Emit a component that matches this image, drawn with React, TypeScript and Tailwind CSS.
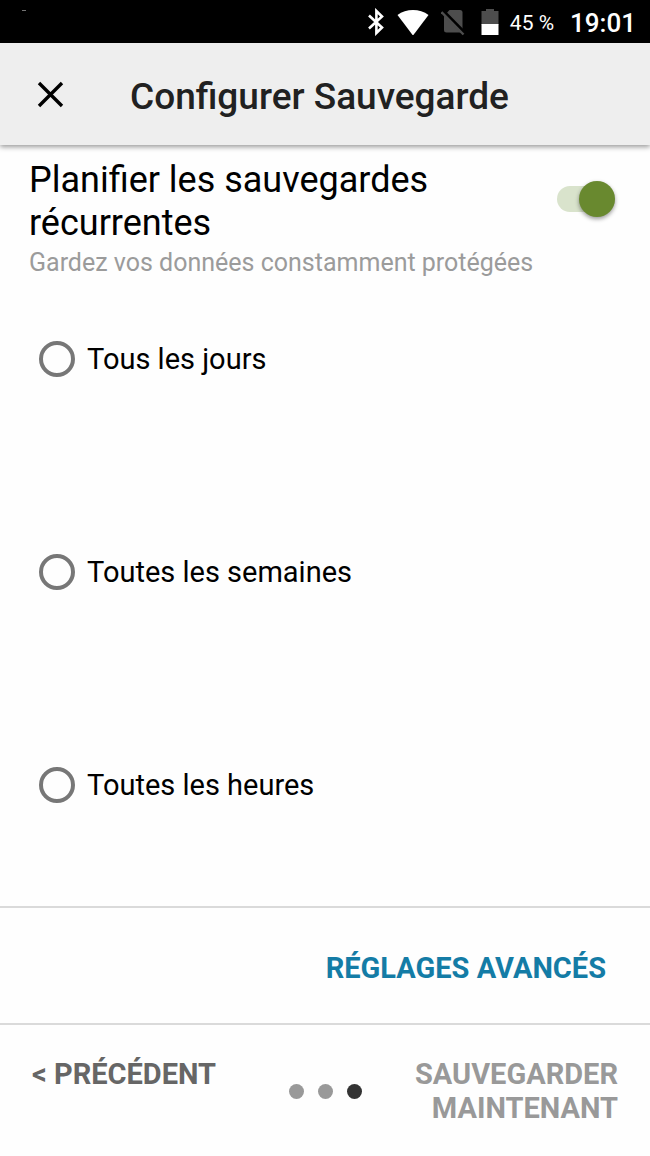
import { useState } from "react";

const frequencies = [
  { id: "daily", label: "Tous les jours" },
  { id: "weekly", label: "Toutes les semaines" },
  { id: "hourly", label: "Toutes les heures" },
];

const StatusBar = () => {
  return (
    <div className="flex h-[43px] items-center justify-between bg-black pl-[22px] pr-[14px] text-white">
      <span className="mb-[22px] h-px w-1 bg-neutral-500"></span>
      <div className="flex items-center">
        {/* Bluetooth */}
        <svg className="h-7 w-[18px]" viewBox="0 0 18 28" fill="none" stroke="currentColor" strokeWidth="2.6">
          <path d="M2 7.5 L15 19.5 L9.4 25 V3 L15 8.5 L2 20.5" />
        </svg>
        {/* Wifi */}
        <svg className="ml-3 h-7 w-8" viewBox="0 0 32 28" fill="currentColor">
          <path d="M0.5 7 C9 0.2 23 0.2 31.5 7 L16.4 27 H15.6 Z" />
        </svg>
        {/* No SIM */}
        <svg className="ml-3 h-7 w-6" viewBox="0 0 24 28">
          <path d="M8.5 2 H19 Q21.5 2 21.5 4.5 V24.5 H5.5 Q3 24.5 3 22 V8 Z" fill="#4d4d4d" />
          <path d="M2 2.5 L25 26" stroke="#000" strokeWidth="3" />
          <path d="M0.5 4 L22.5 26.5" stroke="#4d4d4d" strokeWidth="2.4" />
        </svg>
        {/* Battery */}
        <svg className="ml-4 h-7 w-[18px]" viewBox="0 0 18 28">
          <path d="M0.5 3 H5 V1 H13 V3 H17.5 V17 H0.5 Z" fill="#4d4d4d" />
          <path d="M0.5 16 H17.5 V27 H0.5 Z" fill="#fff" />
        </svg>
        <span className="ml-[11px] pt-0.5 text-[21px] leading-7">45 %</span>
        <span className="ml-4 pt-0.5 text-[26px] font-medium leading-7">19:01</span>
      </div>
    </div>
  );
};

const Header = () => {
  return (
    <header className="relative flex h-[102px] items-center bg-[#eeeeee] pl-[37px] shadow-[0_2px_5px_rgba(0,0,0,0.4)]">
      <button type="button" aria-label="Fermer">
        <svg className="h-[27px] w-[27px]" viewBox="0 0 27 27" fill="none" stroke="#000" strokeWidth="3.4">
          <path d="M2 2 L25 25 M25 2 L2 25" />
        </svg>
      </button>
      <h1 className="ml-[66px] pt-1 text-[37px] font-medium leading-[43px] text-[#212121]">
        Configurer Sauvegarde
      </h1>
    </header>
  );
};

export default function App() {
  const [recurring, setRecurring] = useState(true);
  const [frequency, setFrequency] = useState("");

  return (
    <div className="flex min-h-screen flex-col bg-[#fefefe] font-['Roboto',sans-serif] text-black">
      <StatusBar />
      <Header />

      <main className="flex flex-1 flex-col">
        <div className="flex items-start justify-between pl-[29px] pr-[35px] pt-[14px]">
          <label htmlFor="recurring" className="flex-1">
            <span className="block max-w-[420px] text-[36px] leading-[43px]">
              Planifier les sauvegardes récurrentes
            </span>
            <span className="block text-[25px] leading-9 text-[#9b9b9b]">
              Gardez vos données constamment protégées
            </span>
          </label>
          <div className="relative mt-[22px] flex h-9 w-[58px] items-center">
            <input
              id="recurring"
              type="checkbox"
              role="switch"
              checked={recurring}
              onChange={(e) => setRecurring(e.target.checked)}
              className="peer h-[26px] w-full appearance-none rounded-full bg-neutral-300 checked:bg-[#d9e3cc]"
            />
            <span className="pointer-events-none absolute left-0 top-0 size-9 rounded-full bg-neutral-100 shadow-[0_2px_4px_rgba(0,0,0,0.4)] peer-checked:left-auto peer-checked:right-0 peer-checked:bg-[#69892f]"></span>
          </div>
        </div>

        <div
          role="radiogroup"
          aria-label="Fréquence"
          className="flex flex-1 flex-col justify-between px-[39px] pb-[103px] pt-[60px]"
        >
          {frequencies.map(({ id, label }) => (
            <label key={id} className="flex items-center gap-3 text-[29px] leading-9">
              <input
                type="radio"
                name="frequency"
                value={id}
                checked={frequency === id}
                onChange={() => setFrequency(id)}
                className="size-9 appearance-none rounded-full border-4 border-[#777777] checked:border-[#69892f] checked:bg-[#69892f] checked:bg-clip-content checked:p-1"
              />
              {label}
            </label>
          ))}
        </div>

        <div className="flex justify-end border-t-2 border-[#dadada] px-11 pb-[37px] pt-[42px]">
          <button type="button" className="text-[29px] font-bold leading-9 text-[#147ca6]">
            RÉGLAGES AVANCÉS
          </button>
        </div>
      </main>

      <footer className="grid grid-cols-[1fr_auto_1fr] items-start border-t-2 border-[#dadada] px-8 pb-[31px] pt-8 text-[29px] font-bold leading-[34px]">
        <button type="button" className="justify-self-start text-[#666666]">
          &lt; PRÉCÉDENT
        </button>
        <div className="flex items-center gap-[14px] self-center">
          <span className="size-[15px] rounded-full bg-[#999999]"></span>
          <span className="size-[15px] rounded-full bg-[#999999]"></span>
          <span className="size-[15px] rounded-full bg-[#333333]"></span>
        </div>
        <button type="button" className="max-w-[220px] justify-self-end text-right text-[#999999]">
          SAUVEGARDER MAINTENANT
        </button>
      </footer>
    </div>
  );
}
